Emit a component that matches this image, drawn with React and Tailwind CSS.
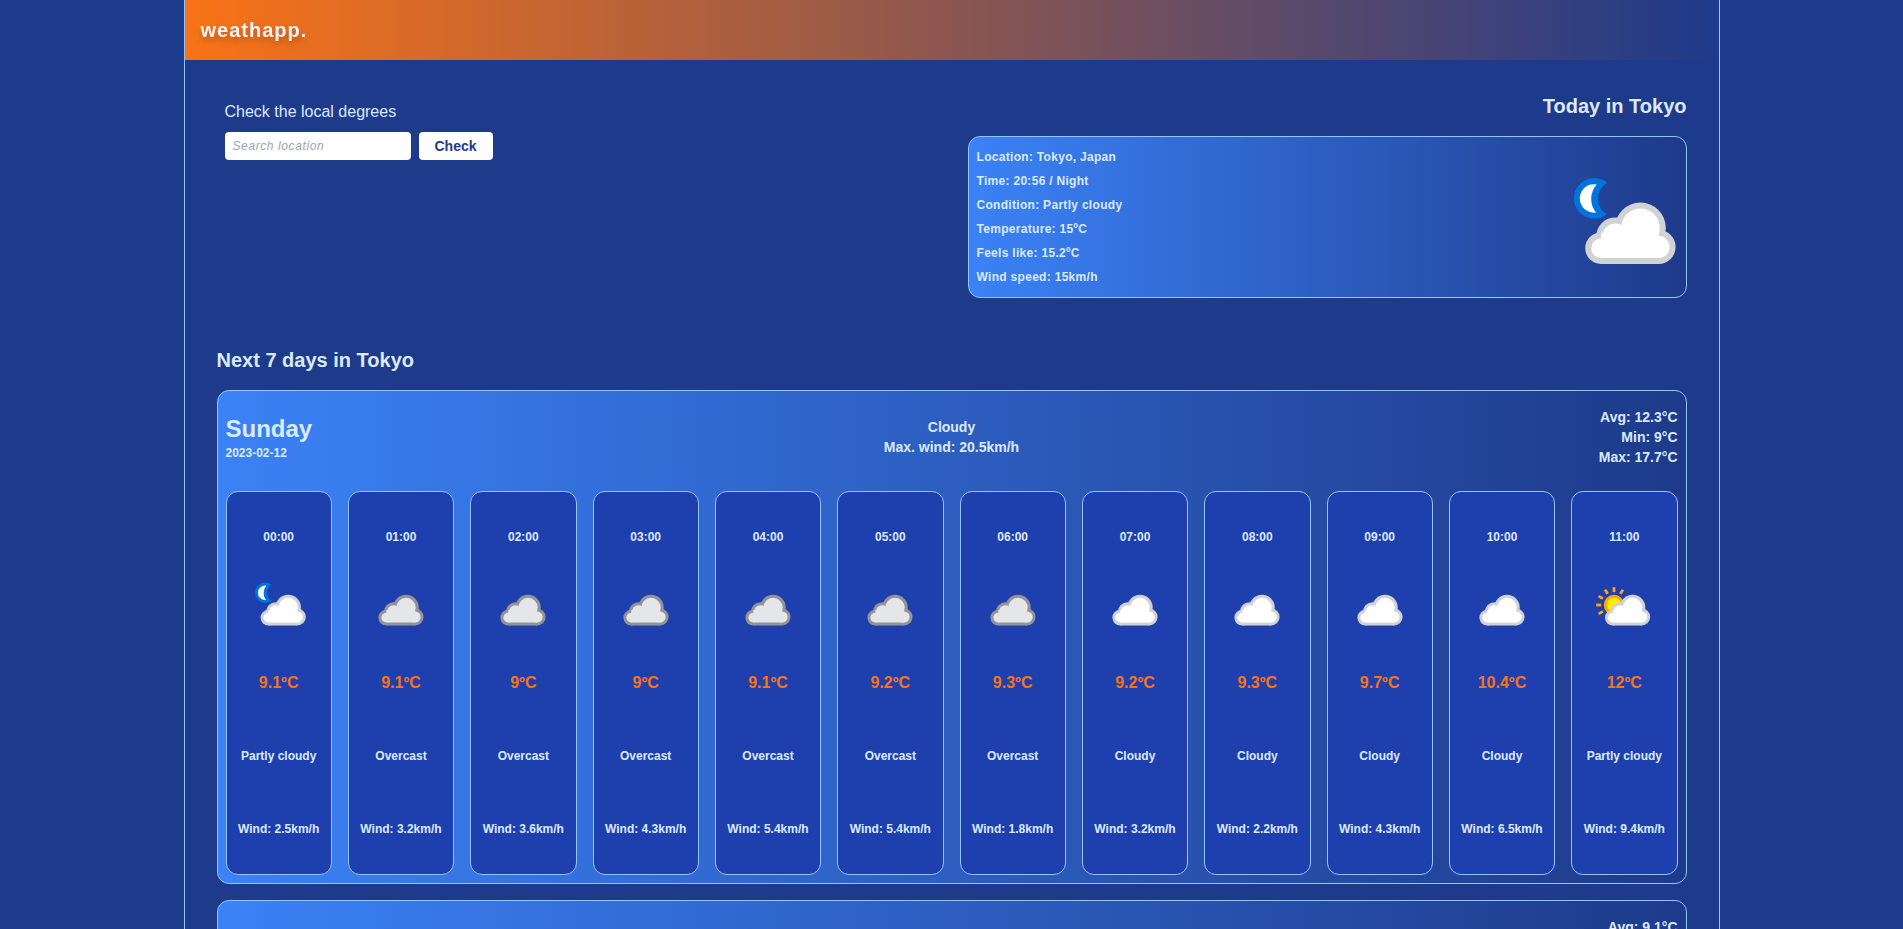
function Cloud({ inset = 0, fill }) {
  return (
    <g fill={fill}>
      <circle cx="41.2" cy="37.5" r={12.7 - inset} />
      <circle cx="28.7" cy="41.8" r={9.6 - inset} />
      <circle cx="21.5" cy="47.6" r={7.9 - inset} />
      <circle cx="50.3" cy="47" r={8.5 - inset} />
      <rect x="21.5" y="40" width="28.8" height={15.5 - inset} />
    </g>
  );
}

const RAYS = [30, 0, -30, -60, -90, -120];
const OFFSETS = { night: 0, day: -0.6, cloudy: -4.2, overcast: -4.2 };

function WeatherIcon({ kind, className }) {
  const overcast = kind === "overcast";
  return (
    <svg viewBox="0 0 64 64" className={className} aria-hidden="true">
      {kind === "night" && (
        <g>
          <path d="M24.6 14.8 A10.15 10.15 0 1 0 24.3 30.7 A9.4 9.4 0 0 1 24.6 14.8 Z" fill="#0074dc" />
          <path d="M19.4 15.7 A7.15 7.15 0 1 0 19 29.8 A10.9 10.9 0 0 1 19.4 15.7 Z" fill="#fff" />
        </g>
      )}
      {kind === "day" && (
        <g>
          <circle cx="22" cy="35" r="8.7" fill="#ffee00" stroke="#ffa50a" strokeWidth="3" />
          {RAYS.map((angle) => (
            <path key={angle} d="M22 17.2 V22.2" transform={`rotate(${angle} 22 35)`} stroke="#ffa50a" strokeWidth="2.8" />
          ))}
        </g>
      )}
      <g transform={`translate(${OFFSETS[kind]} 0)`}>
        <Cloud fill={overcast ? "#929497" : "#d1d2d4"} />
        <Cloud inset={3} fill={overcast ? "#e5e6e9" : "#fff"} />
      </g>
    </svg>
  );
}

const HOURS = [
  ["00:00", "night", "9.1", "Partly cloudy", "2.5"],
  ["01:00", "overcast", "9.1", "Overcast", "3.2"],
  ["02:00", "overcast", "9", "Overcast", "3.6"],
  ["03:00", "overcast", "9", "Overcast", "4.3"],
  ["04:00", "overcast", "9.1", "Overcast", "5.4"],
  ["05:00", "overcast", "9.2", "Overcast", "5.4"],
  ["06:00", "overcast", "9.3", "Overcast", "1.8"],
  ["07:00", "cloudy", "9.2", "Cloudy", "3.2"],
  ["08:00", "cloudy", "9.3", "Cloudy", "2.2"],
  ["09:00", "cloudy", "9.7", "Cloudy", "4.3"],
  ["10:00", "cloudy", "10.4", "Cloudy", "6.5"],
  ["11:00", "day", "12", "Partly cloudy", "9.4"],
];

const DAYS = [
  { name: "Sunday", date: "2023-02-12", text: "Cloudy", wind: "20.5", temps: ["Avg: 12.3°C", "Min: 9°C", "Max: 17.7°C"], hours: HOURS },
  { temps: ["Avg: 9.1°C"], hours: [] },
];

const TODAY = [
  "Location: Tokyo, Japan",
  "Time: 20:56 / Night",
  "Condition: Partly cloudy",
  "Temperature: 15ºC",
  "Feels like: 15.2ºC",
  "Wind speed: 15km/h",
];

function HourCard({ hour }) {
  const [time, kind, temp, text, wind] = hour;
  return (
    <li className="grid h-96 grid-rows-5 place-items-center rounded-xl border border-[#93c5fd] bg-[#1e40af] py-2 text-xs whitespace-nowrap">
      <p>{time}</p>
      <WeatherIcon kind={kind} className="-mt-4 size-16" />
      <p className="text-base text-[#f97316]">{temp}ºC</p>
      <p>{text}</p>
      <p>Wind: {wind}km/h</p>
    </li>
  );
}

function DayCard({ day }) {
  return (
    <article className="rounded-xl border border-[#93c5fd] bg-linear-to-r/srgb from-[#3b82f6] to-[#1e3a8a] p-2 font-bold text-[#dbeafe]">
      <header className="mb-4 grid grid-cols-3 items-center py-2 text-sm">
        <div>
          {day.name && <h3 className="text-2xl">{day.name}</h3>}
          {day.date && <p className="text-xs">{day.date}</p>}
        </div>
        <div className="text-center">
          {day.text && <p>{day.text}</p>}
          {day.wind && <p>Max. wind: {day.wind}km/h</p>}
        </div>
        <div className="text-right">
          {day.temps.map((line) => (
            <p key={line}>{line}</p>
          ))}
        </div>
      </header>
      <ul className="grid grid-cols-12 gap-4">
        {day.hours.map((hour) => (
          <HourCard key={hour[0]} hour={hour} />
        ))}
      </ul>
    </article>
  );
}

export default function App() {
  return (
    <div className="h-screen overflow-hidden bg-[#1e3a8a] font-['Liberation_Sans',Arial,sans-serif] text-[#dbeafe]">
      <div className="mx-auto min-h-full max-w-[1536px] border-x border-[#93c5fd]">
        <header className="flex h-15 items-center bg-linear-to-r/srgb from-[#f97316] to-[#1e3a8a] px-4">
          <h1 className="text-xl font-bold tracking-wider text-[#f1f5f9] drop-shadow-[0_4px_3px_rgba(0,0,0,0.2)]">weathapp.</h1>
        </header>
        <main className="p-8">
          <section className="grid grid-cols-2 gap-8">
            <form className="flex flex-col gap-2 p-2" onSubmit={(e) => e.preventDefault()}>
              <label htmlFor="location">Check the local degrees</label>
              <div className="flex gap-2">
                <input
                  id="location"
                  placeholder="Search location"
                  className="h-7 w-[186px] rounded bg-white px-2 text-xs tracking-wider text-[#1e3a8a] placeholder:text-[#9ca3af] placeholder:italic"
                />
                <button className="h-7 rounded bg-white px-4 text-sm font-bold text-[#1e3a8a]">Check</button>
              </div>
            </form>
            <div>
              <h2 className="mb-4 text-right text-xl font-bold">Today in Tokyo</h2>
              <div className="flex items-center justify-between rounded-xl border border-[#93c5fd] bg-linear-to-r/srgb from-[#3b82f6] to-[#1e3a8a]">
                <div className="p-2 text-xs leading-6 font-bold tracking-wide">
                  {TODAY.map((line) => (
                    <p key={line}>{line}</p>
                  ))}
                </div>
                <WeatherIcon kind="night" className="size-32" />
              </div>
            </div>
          </section>
          <section className="mt-12">
            <h2 className="mb-4 text-xl font-bold">Next 7 days in Tokyo</h2>
            <div className="flex flex-col gap-4">
              {DAYS.map((day) => (
                <DayCard key={day.temps[0]} day={day} />
              ))}
            </div>
          </section>
        </main>
      </div>
    </div>
  );
}
